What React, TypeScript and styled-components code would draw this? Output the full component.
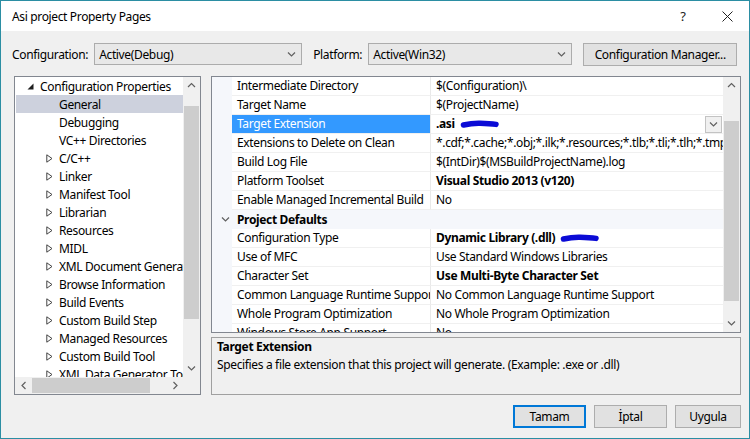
import React from 'react';
import styled, { createGlobalStyle, css } from 'styled-components';

const GlobalStyle = createGlobalStyle`
  html, body {
    margin: 0;
    padding: 0;
    background: #ffffff;
  }
  * {
    box-sizing: border-box;
  }
`;

const FONT = `"Noto Sans", "Open Sans", sans-serif`;

const SWindow = styled.div`
  width: 750px;
  height: 439px;
  border: 1px solid #2b8ea3;
  background: #f0f0f0;
  display: flex;
  flex-direction: column;
  font-family: ${FONT};
  font-size: 12px;
  letter-spacing: -0.35px;
  color: #000;
  overflow: hidden;
`;

const STitleBar = styled.div`
  height: 30px;
  background: #fff;
  display: flex;
  align-items: center;
  padding-left: 11px;
`;

const STitle = styled.div`
  flex: 1;
`;

const STitleButton = styled.div`
  width: 44px;
  height: 30px;
  display: flex;
  align-items: center;
  justify-content: center;
  font-size: 13px;
  color: #222;
`;

const SBody = styled.div`
  flex: 1;
  display: flex;
  flex-direction: column;
  padding: 12px 8px 0 13px;
`;

const SConfigRow = styled.div`
  display: flex;
  align-items: center;
  height: 22px;
  margin-left: -2px;
`;

const SLabel = styled.span<{ $ml?: number }>`
  margin-left: ${(p) => p.$ml ?? 0}px;
  margin-right: 6px;
  white-space: nowrap;
`;

const SCombo = styled.div<{ $w: number }>`
  width: ${(p) => p.$w}px;
  height: 22px;
  border: 1px solid #acacac;
  background: #e8e8e8;
  display: flex;
  align-items: center;
  padding-left: 4px;
  padding-right: 5px;

  span {
    flex: 1;
  }
`;

const SButton = styled.button<{ $w: number; $default?: boolean }>`
  width: ${(p) => p.$w}px;
  height: 23px;
  border: 1px solid #adadad;
  background: #e1e1e1;
  font-family: ${FONT};
  font-size: 12px;
  letter-spacing: -0.35px;
  color: #000;
  padding: 0;
  ${(p) =>
    p.$default &&
    css`
      border: 2px solid #0078d7;
    `}
`;

const SMain = styled.div`
  display: flex;
  gap: 10px;
  margin-top: 11px;
  height: 319px;
`;

const STree = styled.div`
  width: 187px;
  border: 1px solid #828790;
  background: #fff;
  display: grid;
  grid-template-columns: 1fr 17px;
  grid-template-rows: 1fr 17px;
`;

const STreeItems = styled.div`
  overflow: hidden;
  padding-left: 1px;
`;

const STreeRow = styled.div<{ $level: number; $selected?: boolean }>`
  height: 18px;
  display: flex;
  align-items: center;
  white-space: nowrap;
  padding-left: ${(p) => 8 + p.$level * 19}px;
  background: ${(p) => (p.$selected ? '#cdd1dd' : 'transparent')};
`;

const SExpander = styled.span`
  width: 13px;
  flex-shrink: 0;
  margin-right: 3px;
  display: flex;
  align-items: center;
  justify-content: center;
`;

const SScrollV = styled.div`
  background: #f0f0f0;
  display: flex;
  flex-direction: column;
`;

const SScrollH = styled.div`
  background: #f0f0f0;
  display: flex;
`;

const SScrollBtn = styled.div`
  width: 17px;
  height: 17px;
  flex-shrink: 0;
  display: flex;
  align-items: center;
  justify-content: center;
`;

const STrack = styled.div`
  flex: 1;
  display: flex;
`;

const SThumbV = styled.div<{ $top: number; $size: number }>`
  margin-top: ${(p) => p.$top}px;
  margin-left: 1px;
  width: 15px;
  height: ${(p) => p.$size}px;
  background: #cdcdcd;
`;

const SThumbH = styled.div<{ $left: number; $size: number }>`
  margin-left: ${(p) => p.$left}px;
  margin-top: 1px;
  height: 15px;
  width: ${(p) => p.$size}px;
  background: #cdcdcd;
`;

const SCorner = styled.div`
  background: #f0f0f0;
`;

const SRight = styled.div`
  flex: 1;
  display: flex;
  flex-direction: column;
  gap: 4px;
`;

const SGrid = styled.div`
  height: 257px;
  border: 1px solid #828790;
  background: #fff;
  display: flex;
`;

const SGridRows = styled.div`
  flex: 1;
  overflow: hidden;
`;

const SPropRow = styled.div`
  height: 19px;
  display: grid;
  grid-template-columns: 20px 199px 1fr;
`;

const SGutter = styled.div`
  background: #f5f7fb;
`;

const SPropLabel = styled.div<{ $selected?: boolean }>`
  padding-left: 5px;
  line-height: 18px;
  white-space: nowrap;
  overflow: hidden;
  border-right: 1px solid #e9e9e9;
  border-bottom: 1px solid #f0f0f0;
  ${(p) =>
    p.$selected &&
    css`
      background: #3399ff;
      color: #fff;
    `}
`;

const SPropValue = styled.div<{ $bold?: boolean }>`
  padding-left: 5px;
  line-height: 18px;
  white-space: nowrap;
  overflow: hidden;
  border-bottom: 1px solid #f0f0f0;
  display: flex;
  align-items: center;
  font-weight: ${(p) => (p.$bold ? 700 : 400)};
`;

const SDropBtn = styled.div`
  margin-left: auto;
  margin-right: 1px;
  width: 17px;
  height: 17px;
  flex-shrink: 0;
  border: 1px solid #c3c3c3;
  background: #f0f0f0;
  display: flex;
  align-items: center;
  justify-content: center;
`;

const SCategory = styled.div`
  height: 19px;
  background: #f5f7fb;
  display: flex;
  align-items: center;
  font-weight: 700;
`;

const SCatToggle = styled.span`
  width: 25px;
  display: flex;
  justify-content: center;
  padding-left: 2px;
`;

const SDesc = styled.div`
  height: 58px;
  border: 1px solid #a0a0a0;
  padding: 0 5px;
  line-height: 18px;
`;

const SDescTitle = styled.div`
  font-weight: 700;
`;

const SFooter = styled.div`
  display: flex;
  justify-content: flex-end;
  gap: 8px;
  margin-top: 10px;
`;

const Chevron = ({ dir = 'down', color = '#606060' }: { dir?: 'up' | 'down' | 'left' | 'right'; color?: string }) => {
  const paths = {
    down: 'M1 1.5 L4.5 5 L8 1.5',
    up: 'M1 5 L4.5 1.5 L8 5',
    left: 'M5.5 1 L2 4.5 L5.5 8',
    right: 'M2.5 1 L6 4.5 L2.5 8',
  };
  const horiz = dir === 'left' || dir === 'right';
  return (
    <svg width={horiz ? 8 : 9} height={horiz ? 9 : 6.5} viewBox={horiz ? '0 0 8 9' : '0 0 9 6.5'}>
      <path d={paths[dir]} fill="none" stroke={color} strokeWidth="1.2" />
    </svg>
  );
};

const Expanded = () => (
  <svg width="7" height="7" viewBox="0 0 7 7">
    <path d="M6.5 0.5 L6.5 6.5 L0.5 6.5 Z" fill="#1e1e1e" />
  </svg>
);

const Collapsed = () => (
  <svg width="7" height="9" viewBox="0 0 7 9">
    <path d="M0.8 0.8 L6 4.5 L0.8 8.2 Z" fill="none" stroke="#444" strokeWidth="1" />
  </svg>
);

const Scribble = () => (
  <svg width="40" height="9" viewBox="0 0 40 9" style={{ marginLeft: 5, flexShrink: 0 }}>
    <path d="M3.5 5 Q12 3 20 3.2 Q30 3.4 36 4.4" fill="none" stroke="#0b0bd6" strokeWidth="5.5" strokeLinecap="round" />
  </svg>
);

const CloseIcon = () => (
  <svg width="11" height="11" viewBox="0 0 11 11">
    <path d="M0.5 0.5 L10.5 10.5 M10.5 0.5 L0.5 10.5" stroke="#222" strokeWidth="1" />
  </svg>
);

const treeItems: { text: string; level: number; kind: 'open' | 'closed' | 'leaf'; selected?: boolean }[] = [
  { text: 'Configuration Properties', level: 0, kind: 'open' },
  { text: 'General', level: 1, kind: 'leaf', selected: true },
  { text: 'Debugging', level: 1, kind: 'leaf' },
  { text: 'VC++ Directories', level: 1, kind: 'leaf' },
  { text: 'C/C++', level: 1, kind: 'closed' },
  { text: 'Linker', level: 1, kind: 'closed' },
  { text: 'Manifest Tool', level: 1, kind: 'closed' },
  { text: 'Librarian', level: 1, kind: 'closed' },
  { text: 'Resources', level: 1, kind: 'closed' },
  { text: 'MIDL', level: 1, kind: 'closed' },
  { text: 'XML Document Generator', level: 1, kind: 'closed' },
  { text: 'Browse Information', level: 1, kind: 'closed' },
  { text: 'Build Events', level: 1, kind: 'closed' },
  { text: 'Custom Build Step', level: 1, kind: 'closed' },
  { text: 'Managed Resources', level: 1, kind: 'closed' },
  { text: 'Custom Build Tool', level: 1, kind: 'closed' },
  { text: 'XML Data Generator Tool', level: 1, kind: 'closed' },
];

type Prop = {
  label?: string;
  value?: string;
  bold?: boolean;
  selected?: boolean;
  mark?: boolean;
  category?: string;
};

const properties: Prop[] = [
  { label: 'Intermediate Directory', value: '$(Configuration)\\' },
  { label: 'Target Name', value: '$(ProjectName)' },
  { label: 'Target Extension', value: '.asi', bold: true, selected: true, mark: true },
  {
    label: 'Extensions to Delete on Clean',
    value: '*.cdf;*.cache;*.obj;*.ilk;*.resources;*.tlb;*.tli;*.tlh;*.tmp;*.rsp;*.pgc;*.pgd;*.meta;*.tlog',
  },
  { label: 'Build Log File', value: '$(IntDir)$(MSBuildProjectName).log' },
  { label: 'Platform Toolset', value: 'Visual Studio 2013 (v120)', bold: true },
  { label: 'Enable Managed Incremental Build', value: 'No' },
  { category: 'Project Defaults' },
  { label: 'Configuration Type', value: 'Dynamic Library (.dll)', bold: true, mark: true },
  { label: 'Use of MFC', value: 'Use Standard Windows Libraries' },
  { label: 'Character Set', value: 'Use Multi-Byte Character Set', bold: true },
  { label: 'Common Language Runtime Support', value: 'No Common Language Runtime Support' },
  { label: 'Whole Program Optimization', value: 'No Whole Program Optimization' },
  { label: 'Windows Store App Support', value: 'No' },
];

const App: React.FC = () => {
  return (
    <>
      <GlobalStyle />
      <SWindow>
        <STitleBar>
          <STitle>Asi project Property Pages</STitle>
          <STitleButton>?</STitleButton>
          <STitleButton>
            <CloseIcon />
          </STitleButton>
        </STitleBar>
        <SBody>
          <SConfigRow>
            <SLabel>Configuration:</SLabel>
            <SCombo $w={208}>
              <span>Active(Debug)</span>
              <Chevron />
            </SCombo>
            <SLabel $ml={11}>Platform:</SLabel>
            <SCombo $w={204}>
              <span>Active(Win32)</span>
              <Chevron />
            </SCombo>
            <SButton $w={154} style={{ marginLeft: 11 }}>
              Configuration Manager...
            </SButton>
          </SConfigRow>

          <SMain>
            <STree>
              <STreeItems>
                {treeItems.map((t) => (
                  <STreeRow key={t.text} $level={t.level} $selected={t.selected}>
                    <SExpander>
                      {t.kind === 'open' && <Expanded />}
                      {t.kind === 'closed' && <Collapsed />}
                    </SExpander>
                    {t.text}
                  </STreeRow>
                ))}
              </STreeItems>
              <SScrollV>
                <SScrollBtn>
                  <Chevron dir="up" />
                </SScrollBtn>
                <STrack>
                  <SThumbV $top={12} $size={213} />
                </STrack>
                <SScrollBtn>
                  <Chevron dir="down" />
                </SScrollBtn>
              </SScrollV>
              <SScrollH>
                <SScrollBtn>
                  <Chevron dir="left" />
                </SScrollBtn>
                <STrack>
                  <SThumbH $left={0} $size={118} />
                </STrack>
                <SScrollBtn>
                  <Chevron dir="right" />
                </SScrollBtn>
              </SScrollH>
              <SCorner />
            </STree>

            <SRight>
              <SGrid>
                <SGridRows>
                  {properties.map((p, i) =>
                    p.category ? (
                      <SCategory key={i}>
                        <SCatToggle>
                          <Chevron />
                        </SCatToggle>
                        {p.category}
                      </SCategory>
                    ) : (
                      <SPropRow key={i}>
                        <SGutter />
                        <SPropLabel $selected={p.selected}>{p.label}</SPropLabel>
                        <SPropValue $bold={p.bold}>
                          {p.value}
                          {p.mark && <Scribble />}
                          {p.selected && (
                            <SDropBtn>
                              <Chevron />
                            </SDropBtn>
                          )}
                        </SPropValue>
                      </SPropRow>
                    ),
                  )}
                </SGridRows>
                <SScrollV>
                  <SScrollBtn>
                    <Chevron dir="up" />
                  </SScrollBtn>
                  <STrack>
                    <SThumbV $top={27} $size={180} />
                  </STrack>
                  <SScrollBtn>
                    <Chevron dir="down" />
                  </SScrollBtn>
                </SScrollV>
              </SGrid>
              <SDesc>
                <SDescTitle>Target Extension</SDescTitle>
                <div>Specifies a file extension that this project will generate. (Example: .exe or .dll)</div>
              </SDesc>
            </SRight>
          </SMain>

          <SFooter>
            <SButton $w={73} $default>
              Tamam
            </SButton>
            <SButton $w={73}>İptal</SButton>
            <SButton $w={66}>Uygula</SButton>
          </SFooter>
        </SBody>
      </SWindow>
    </>
  );
};

export default App;
